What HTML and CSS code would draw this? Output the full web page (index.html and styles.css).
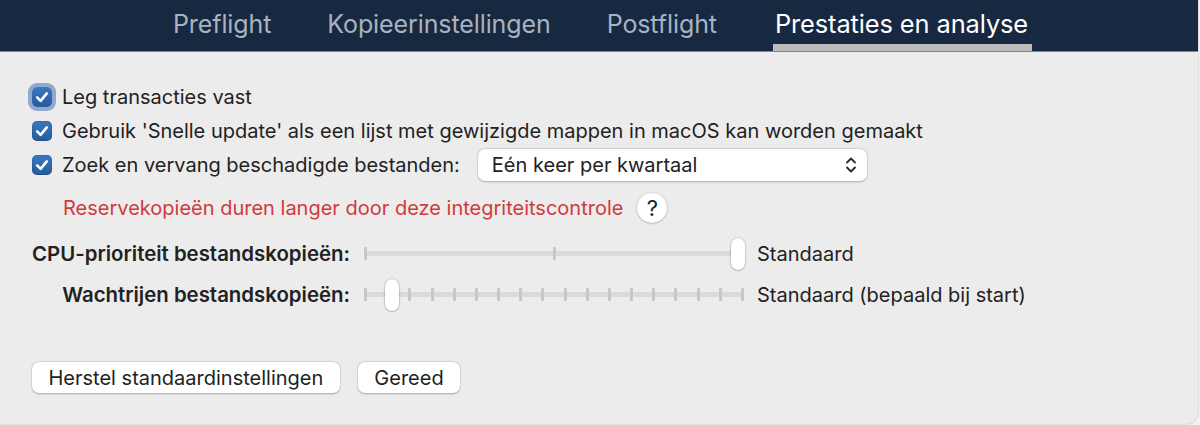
FILE: index.html
```html
<!DOCTYPE html>
<html lang="nl">
<head>
<meta charset="utf-8">
<title>Prestaties en analyse</title>
<link rel="stylesheet" href="styles.css">
</head>
<body>
<div class="window">
  <nav class="tabbar">
    <div class="tab">Preflight</div>
    <div class="tab">Kopieerinstellingen</div>
    <div class="tab">Postflight</div>
    <div class="tab active">Prestaties en analyse</div>
  </nav>
  <main class="content">
    <div class="row">
      <span class="checkbox focused"><svg viewBox="0 0 20 20" width="20" height="20"><path d="M5.2 10.4 L8.6 13.9 L14.8 6.4" fill="none" stroke="#fff" stroke-width="2.6" stroke-linecap="round" stroke-linejoin="round"/></svg></span>
      <span class="label">Leg transacties vast</span>
    </div>
    <div class="row">
      <span class="checkbox"><svg viewBox="0 0 20 20" width="20" height="20"><path d="M5.2 10.4 L8.6 13.9 L14.8 6.4" fill="none" stroke="#fff" stroke-width="2.6" stroke-linecap="round" stroke-linejoin="round"/></svg></span>
      <span class="label">Gebruik 'Snelle update' als een lijst met gewijzigde mappen in macOS kan worden gemaakt</span>
    </div>
    <div class="row">
      <span class="checkbox"><svg viewBox="0 0 20 20" width="20" height="20"><path d="M5.2 10.4 L8.6 13.9 L14.8 6.4" fill="none" stroke="#fff" stroke-width="2.6" stroke-linecap="round" stroke-linejoin="round"/></svg></span>
      <span class="label">Zoek en vervang beschadigde bestanden:</span>
      <div class="popup">
        <span class="popup-text">Eén keer per kwartaal</span>
        <svg class="chevrons" viewBox="0 0 12 18" width="12" height="18"><path d="M2 6.5 L6 2.5 L10 6.5 M2 11.5 L6 15.5 L10 11.5" fill="none" stroke="#2a2a2a" stroke-width="1.8" stroke-linecap="round" stroke-linejoin="round"/></svg>
      </div>
    </div>
    <div class="warning-row">
      <span class="warning">Reservekopieën duren langer door deze integriteitscontrole</span>
      <span class="help">?</span>
    </div>
    <div class="sliders">
      <div class="slider-label">CPU-prioriteit bestandskopieën:</div>
      <div class="slider">
        <div class="ticks"><i></i><i></i><i></i></div>
        <div class="knob" style="left: 367px"></div>
      </div>
      <div class="slider-value">Standaard</div>

      <div class="slider-label">Wachtrijen bestandskopieën:</div>
      <div class="slider">
        <div class="ticks"><i></i><i></i><i></i><i></i><i></i><i></i><i></i><i></i><i></i><i></i><i></i><i></i><i></i><i></i><i></i><i></i><i></i><i></i></div>
        <div class="knob" style="left: 21px"></div>
      </div>
      <div class="slider-value">Standaard (bepaald bij start)</div>
    </div>
    <div class="buttons">
      <span class="button">Herstel standaardinstellingen</span>
      <span class="button">Gereed</span>
    </div>
  </main>
</div>
</body>
</html>
```

FILE: styles.css
```css
* { box-sizing: border-box; }

html, body {
  margin: 0;
  padding: 0;
  background: #f3f3f3;
}

body {
  width: 1200px;
  height: 425px;
  overflow: hidden;
  font-family: Inter, "Noto Sans", "Liberation Sans", sans-serif;
  color: #222;
}

.window {
  width: 1198px;
  height: 424px;
  background: #ececec;
  border-bottom-right-radius: 12px;
  box-shadow: 0 0 2px rgba(0, 0, 0, 0.28);
  overflow: hidden;
}

.tabbar {
  height: 52px;
  background: #172941;
  border-bottom: 1px solid #7d8898;
  display: flex;
  padding-left: 173px;
  gap: 56px;
}

.tab {
  height: 51px;
  padding-top: 3px;
  border-bottom: 7px solid transparent;
  display: flex;
  align-items: center;
  font-size: 25px;
  color: #a9b3bf;
  letter-spacing: -0.1px;
}

.tab.active {
  color: #ffffff;
  border-bottom-color: #bcbcbc;
  margin-left: 0;
  padding-left: 2px;
  padding-right: 4px;
  font-size: 25.4px;
}

.content {
  padding: 28px 0 0 32px;
  font-size: 20px;
}

.row {
  height: 34px;
  display: flex;
  align-items: center;
}

.checkbox {
  width: 20px;
  height: 20px;
  border-radius: 5px;
  background: linear-gradient(#3a78c2, #26599c);
  box-shadow: inset 0 0 0 0.5px rgba(0, 0, 0, 0.2);
  display: flex;
  flex: none;
}

.checkbox.focused {
  box-shadow: 0 0 0 4px rgba(70, 115, 180, 0.55);
}

.label {
  margin-left: 10px;
  white-space: nowrap;
}

.popup {
  margin-left: 18px;
  width: 389px;
  height: 32px;
  background: #fff;
  border-radius: 7px;
  box-shadow: 0 0.5px 2px rgba(0, 0, 0, 0.25), 0 0 0 0.5px rgba(0, 0, 0, 0.08);
  display: flex;
  align-items: center;
  justify-content: space-between;
  padding: 0 10px 0 14px;
}

.chevrons { display: block; }

.warning-row {
  margin-top: 8px;
  height: 36px;
  display: flex;
  align-items: center;
  padding-left: 31px;
}

.warning {
  color: #d13a3c;
}

.help {
  margin-left: 14px;
  width: 30px;
  height: 30px;
  border-radius: 50%;
  background: #fff;
  box-shadow: 0 0.5px 2px rgba(0, 0, 0, 0.3), 0 0 0 0.5px rgba(0, 0, 0, 0.06);
  display: flex;
  align-items: center;
  justify-content: center;
  font-size: 22px;
  font-weight: 400;
  color: #222;
}

.sliders {
  margin-top: 7px;
  display: grid;
  grid-template-columns: 318px 380px auto;
  grid-auto-rows: 41px;
  column-gap: 14px;
  align-items: center;
}

.slider-label {
  text-align: right;
  font-weight: 600;
  font-size: 20.4px;
  white-space: nowrap;
}

.slider-value {
  margin-left: -1px;
}

.slider {
  position: relative;
  height: 41px;
  display: flex;
  align-items: center;
}

.ticks {
  width: 100%;
  height: 13px;
  display: flex;
  justify-content: space-between;
  align-items: center;
  background: linear-gradient(#dadada, #dadada) center / 100% 5px no-repeat;
}

.ticks i {
  width: 3px;
  height: 13px;
  border-radius: 1px;
  background: #c7c7c7;
}

.knob {
  position: absolute;
  top: 5px;
  width: 14px;
  height: 32px;
  border-radius: 7px;
  background: #fff;
  box-shadow: 0 0.5px 2px rgba(0, 0, 0, 0.35), 0 0 0 0.5px rgba(0, 0, 0, 0.1);
}

.buttons {
  margin-top: 47px;
  display: flex;
  gap: 18px;
}

.button {
  height: 31px;
  padding: 0 16.5px;
  background: #fff;
  border-radius: 7px;
  box-shadow: 0 0.5px 2px rgba(0, 0, 0, 0.28), 0 0 0 0.5px rgba(0, 0, 0, 0.06);
  display: flex;
  align-items: center;
  white-space: nowrap;
}
```
